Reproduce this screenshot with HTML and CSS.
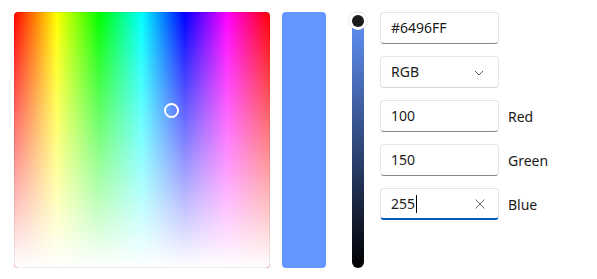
FILE: index.html
```html
<!DOCTYPE html>
<html>
<head>
<meta charset="utf-8">
<link rel="stylesheet" href="styles.css">
</head>
<body>
<div class="picker">
  <div class="spectrum">
    <div class="spectrum-sat"></div>
    <div class="spectrum-ring"></div>
  </div>
  <div class="preview"></div>
  <div class="slider">
    <div class="slider-thumb"><div class="slider-dot"></div></div>
  </div>
  <div class="fields">
    <div class="row">
      <div class="box"><span class="val">#6496FF</span></div>
    </div>
    <div class="row">
      <div class="box combo"><span class="val">RGB</span>
        <svg class="chev" width="10" height="6" viewBox="0 0 10 6"><path d="M1 1 L5 5 L9 1" fill="none" stroke="#5f5f5f" stroke-width="1"/></svg>
      </div>
    </div>
    <div class="row">
      <div class="box"><span class="val">100</span></div>
      <span class="label">Red</span>
    </div>
    <div class="row">
      <div class="box"><span class="val">150</span></div>
      <span class="label">Green</span>
    </div>
    <div class="row">
      <div class="box focused"><span class="val">255</span><span class="caret"></span>
        <svg class="clear" width="10" height="10" viewBox="0 0 10 10"><path d="M0.5 0.5 L9.5 9.5 M9.5 0.5 L0.5 9.5" fill="none" stroke="#606060" stroke-width="1"/></svg>
      </div>
      <span class="label">Blue</span>
    </div>
  </div>
</div>
</body>
</html>
```
FILE: styles.css
```css
html, body {
  margin: 0;
  padding: 0;
  background: #ffffff;
}
body {
  font-family: "Segoe UI", "Noto Sans", "Open Sans", sans-serif;
  font-size: 14px;
  color: #1b1b1b;
}
.picker {
  display: flex;
  align-items: flex-start;
  padding: 12px 14px;
}
.spectrum {
  position: relative;
  width: 256px;
  height: 256px;
  border-radius: 4px;
  overflow: hidden;
  background: linear-gradient(to right, #ff0000 0%, #ffff00 16.67%, #00ff00 33.33%, #00ffff 50%, #0000ff 66.67%, #ff00ff 83.33%, #ff0000 100%);
  flex: none;
}
.spectrum-sat {
  position: absolute;
  inset: 0;
  border-radius: 4px;
  background: linear-gradient(to bottom, rgba(255,255,255,0) 0%, rgba(255,255,255,1) 100%);
  box-shadow: inset 0 0 0 1px rgba(0,0,0,0.07);
}
.spectrum-ring {
  position: absolute;
  left: 150px;
  top: 91px;
  width: 11px;
  height: 11px;
  border: 2px solid #ffffff;
  border-radius: 50%;
}
.preview {
  width: 44px;
  height: 256px;
  margin-left: 12px;
  border-radius: 4px;
  background: #6496ff;
  flex: none;
}
.slider {
  position: relative;
  width: 12px;
  height: 256px;
  margin-left: 26px;
  border-radius: 6px;
  background: linear-gradient(to bottom, #6496ff 0%, #000000 100%);
  flex: none;
}
.slider-thumb {
  position: absolute;
  left: -3px;
  top: 0;
  width: 18px;
  height: 18px;
  border-radius: 50%;
  background: #ffffff;
  box-shadow: 0 0 0 1px rgba(0,0,0,0.08);
  display: flex;
  align-items: center;
  justify-content: center;
}
.slider-dot {
  width: 12px;
  height: 12px;
  border-radius: 50%;
  background: #1a1a1a;
}
.fields {
  display: flex;
  flex-direction: column;
  gap: 12px;
  margin-left: 16px;
}
.row {
  display: flex;
  align-items: center;
  gap: 9px;
}
.box {
  position: relative;
  box-sizing: border-box;
  width: 119px;
  height: 32px;
  border: 1px solid #e5e5e5;
  border-bottom-color: #8a8a8a;
  border-radius: 4px;
  background: #ffffff;
  display: flex;
  align-items: center;
  padding: 0 0 1px 10px;
}
.combo {
  border-bottom-color: #d6d6d6;
}
.focused {
  border-bottom: 2px solid #005fb8;
  padding-bottom: 0;
}
.val {
  line-height: 20px;
}
.caret {
  display: inline-block;
  width: 1px;
  height: 18px;
  background: #000000;
  margin-left: 1px;
}
.chev {
  position: absolute;
  right: 14px;
  top: 13px;
}
.clear {
  position: absolute;
  right: 13px;
  top: 10px;
}
.label {
  line-height: 20px;
  padding-top: 2px;
}
```
